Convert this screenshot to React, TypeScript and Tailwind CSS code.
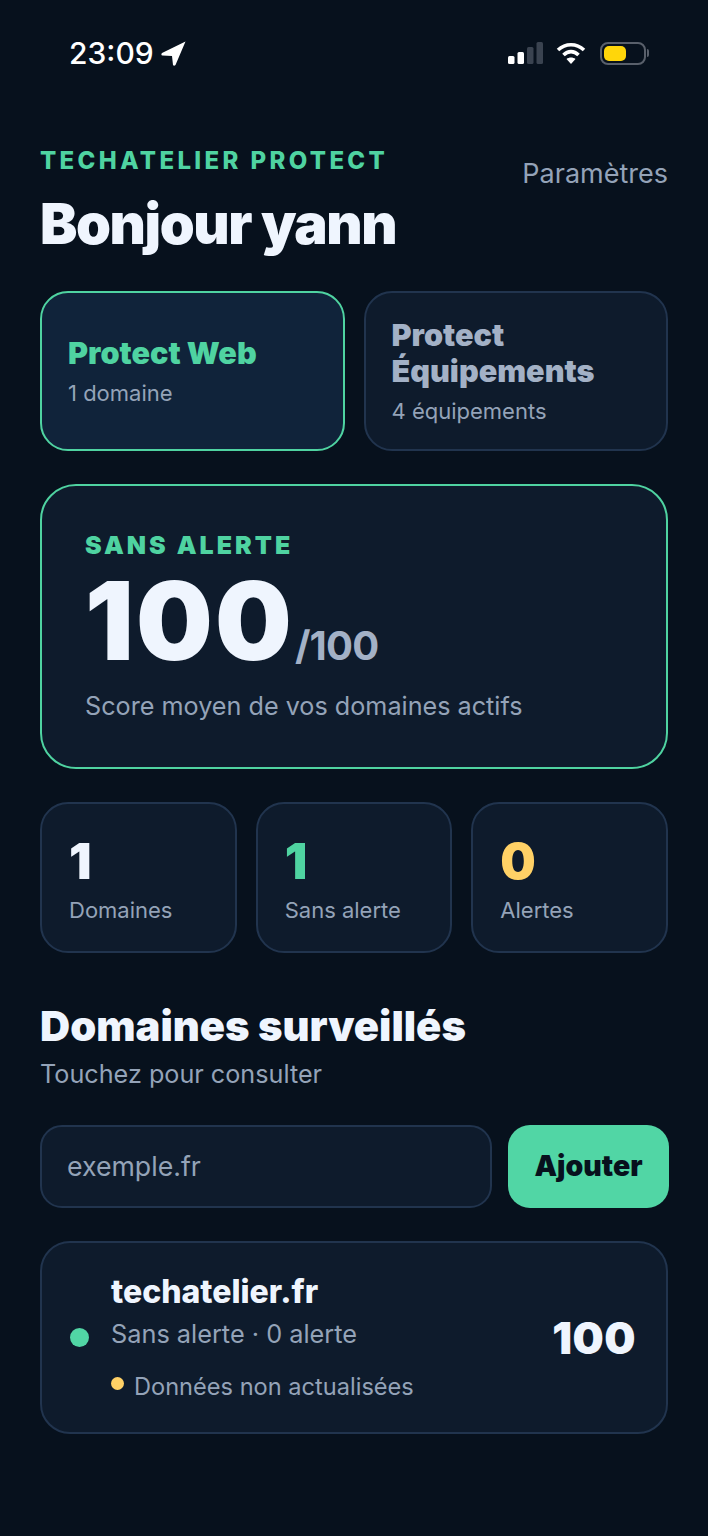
import React from 'react';

const StatCard = ({ value, label, color }: { value: string; label: string; color: string }) => (
  <div className="flex-1 h-[151px] rounded-[28px] border-2 border-[#21344e] bg-[#0e1b2c] pl-[27px] pt-[28px]">
    <div className={`text-[50px] leading-[58px] font-black ${color}`}>{value}</div>
    <div className="mt-[5px] text-[22px] leading-[30px] text-[#94a3b8]">{label}</div>
  </div>
);

const StatusBar = () => (
  <div className="h-[106px] flex items-center justify-between pl-[69px] pr-[59px]">
    <div className="flex items-center gap-[7px] text-white">
      <span className="text-[30px] font-medium leading-none">23:09</span>
      <svg width="25" height="25" viewBox="0 0 25 25" fill="white">
        <path d="M24.5 0.5 L1 12 Q-0.5 14 1.5 14.5 L11 15 L12 24 Q13 25.5 14.5 24 Z" />
      </svg>
    </div>
    <div className="flex items-center">
      <svg width="37" height="24" viewBox="0 0 37 24">
        <rect x="2" y="15" width="6.5" height="8" rx="1.5" fill="white" />
        <rect x="11.5" y="11" width="6.5" height="12" rx="1.5" fill="white" />
        <rect x="21" y="6" width="6.5" height="17" rx="1.5" fill="#3a4350" />
        <rect x="30.5" y="1" width="6.5" height="22" rx="1.5" fill="#3a4350" />
      </svg>
      <svg className="ml-[13px]" width="30" height="24" viewBox="0 0 30 24" fill="none" stroke="white" strokeWidth="3.6">
        <path d="M2 9 C9.5 2 20.5 2 28 9" />
        <path d="M7.5 14 C12 9.5 18 9.5 22.5 14" />
        <path d="M15 23 L10.5 18 C13 16 17 16 19.5 18 Z" fill="white" stroke="none" />
      </svg>
      <div className="ml-[14px] flex items-center gap-[1px]">
        <div className="w-[46px] h-[23px] rounded-[8px] border-2 border-[#59606b] p-[2px]">
          <div className="w-[22px] h-full rounded-[5px] bg-[#ffd60a]" />
        </div>
        <div className="w-[2px] h-[8px] rounded-r-full bg-[#59606b]" />
      </div>
    </div>
  </div>
);

export default function App() {
  return (
    <div className="w-[708px] h-[1536px] bg-[#07111d] font-['Inter',sans-serif] overflow-hidden">
      <StatusBar />

      <div className="px-[40px] pt-[40px]">
        <div className="flex justify-between">
          <div>
            <div className="text-[24px] leading-[30px] font-extrabold tracking-[0.14em] text-[#4fd3a1]">
              TECHATELIER PROTECT
            </div>
            <h1 className="mt-[13px] text-[56px] leading-[70px] font-black tracking-[-0.025em] text-[#eff5fe]">
              Bonjour yann
            </h1>
          </div>
          <div className="pt-[10px] text-[27px] leading-[36px] text-[#94a3b8]">Paramètres</div>
        </div>

        <div className="mt-[32px] flex gap-[19px]">
          <div className="flex-1 h-[160px] rounded-[28px] border-2 border-[#4fd3a1] bg-[#10233a] pl-[26px] flex flex-col justify-center">
            <div className="text-[30.6px] leading-[36px] font-black text-[#4fd3a1]">Protect Web</div>
            <div className="mt-[7px] text-[22px] leading-[30px] text-[#94a3b8]">1 domaine</div>
          </div>
          <div className="flex-1 h-[160px] rounded-[28px] border-2 border-[#21344e] bg-[#0e1b2c] pl-[26px] flex flex-col justify-center">
            <div className="text-[30.6px] leading-[36px] font-black text-[#a3b1c6]">
              Protect
              <br />
              Équipements
            </div>
            <div className="mt-[7px] text-[22px] leading-[30px] text-[#94a3b8]">4 équipements</div>
          </div>
        </div>

        <div className="mt-[33px] h-[285px] rounded-[36px] border-2 border-[#4fd3a1] bg-[#0e1b2c] pl-[43px] pt-[44px]">
          <div className="text-[25px] leading-[30px] font-black tracking-[0.12em] text-[#4fd3a1]">SANS ALERTE</div>
          <div className="flex items-baseline h-[100px] mt-[11px]">
            <span className="text-[108px] leading-[100px] font-black tracking-[0.02em] text-[#eff5fe]">100</span>
            <span className="ml-[1px] text-[40px] leading-[48px] font-bold tracking-[-0.02em] text-[#a3b1c6]">/100</span>
          </div>
          <div className="mt-[19px] text-[25.2px] leading-[32px] text-[#94a3b8]">Score moyen de vos domaines actifs</div>
        </div>

        <div className="mt-[33px] flex gap-[19px]">
          <StatCard value="1" label="Domaines" color="text-[#eff5fe]" />
          <StatCard value="1" label="Sans alerte" color="text-[#4fd3a1]" />
          <StatCard value="0" label="Alertes" color="text-[#ffd166]" />
        </div>

        <h2 className="mt-[48px] text-[41.7px] leading-[50px] font-black text-[#eff5fe]">Domaines surveillés</h2>
        <div className="mt-[7px] text-[25.2px] leading-[32px] text-[#94a3b8]">Touchez pour consulter</div>

        <div className="mt-[35px] flex gap-[16px] mr-[-1px]">
          <div className="flex-1 h-[83px] rounded-[22px] border-2 border-[#21344e] bg-[#0e1b2c] pl-[25px] flex items-center text-[26.7px] text-[#94a3b8]">
            exemple.fr
          </div>
          <div className="w-[161px] h-[83px] rounded-[22px] bg-[#51d6a5] flex items-center justify-center text-[28.5px] font-black text-[#07111d]">
            Ajouter
          </div>
        </div>

        <div className="mt-[33px] h-[193px] rounded-[30px] border-2 border-[#21344e] bg-[#0e1b2c] flex items-center pl-[28px] pr-[30px]">
          <div className="w-[19px] h-[19px] rounded-full bg-[#51d6a5]" />
          <div className="ml-[22px] flex-1">
            <div className="text-[32px] leading-[40px] font-extrabold text-[#eff5fe]">techatelier.fr</div>
            <div className="mt-[4px] text-[25.3px] leading-[36px] text-[#94a3b8]">Sans alerte · 0 alerte</div>
            <div className="mt-[18px] flex items-center gap-[10px] text-[23.6px] leading-[34px] text-[#94a3b8]">
              <div className="w-[13px] h-[13px] rounded-full bg-[#ffd166] mt-[-6px]" />
              Données non actualisées
            </div>
          </div>
          <div className="text-[44px] font-black tracking-[0.01em] text-[#eff5fe]">100</div>
        </div>
      </div>
    </div>
  );
}
